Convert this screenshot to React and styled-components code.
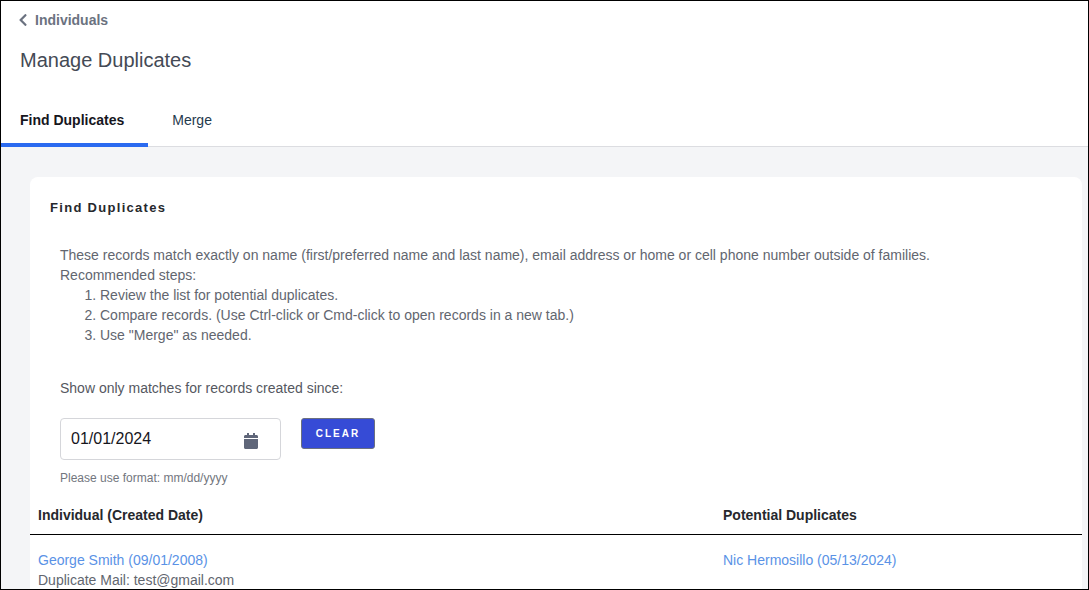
import React from 'react';
import styled, { createGlobalStyle } from 'styled-components';
import { FaCalendar, FaChevronLeft } from 'react-icons/fa';

const GlobalStyle = createGlobalStyle`
  html, body {
    margin: 0;
    padding: 0;
    background: #fff;
  }
  * {
    box-sizing: border-box;
  }
`;

const App = () => (
  <>
    <GlobalStyle />
    <Page>
      <Header>
        <BackLink>
          <FaChevronLeft size={14} />
          Individuals
        </BackLink>
        <Title>Manage Duplicates</Title>
        <Tabs>
          <Tab $active>Find Duplicates</Tab>
          <Tab>Merge</Tab>
        </Tabs>
      </Header>
      <Content>
        <Card>
          <CardTitle>Find Duplicates</CardTitle>
          <Intro>
            These records match exactly on name (first/preferred name and last name), email address or home or cell phone number outside of families.
            <br />
            Recommended steps:
            <Steps>
              <li>Review the list for potential duplicates.</li>
              <li>Compare records. (Use Ctrl-click or Cmd-click to open records in a new tab.)</li>
              <li>Use "Merge" as needed.</li>
            </Steps>
          </Intro>
          <FilterLabel>Show only matches for records created since:</FilterLabel>
          <FilterRow>
            <DateField>
              <DateValue>01/01/2024</DateValue>
              <CalendarIcon size={16} />
            </DateField>
            <ClearButton>CLEAR</ClearButton>
          </FilterRow>
          <Hint>Please use format: mm/dd/yyyy</Hint>
          <Table>
            <thead>
              <tr>
                <HeadCell $wide>Individual (Created Date)</HeadCell>
                <HeadCell>Potential Duplicates</HeadCell>
              </tr>
            </thead>
            <tbody>
              <tr>
                <BodyCell>
                  <PersonLink>George Smith (09/01/2008)</PersonLink>
                  <Detail>Duplicate Mail: test@gmail.com</Detail>
                </BodyCell>
                <BodyCell>
                  <PersonLink>Nic Hermosillo (05/13/2024)</PersonLink>
                </BodyCell>
              </tr>
            </tbody>
          </Table>
        </Card>
      </Content>
    </Page>
  </>
);

const Page = styled.div`
  width: 1089px;
  height: 590px;
  overflow: hidden;
  border: 1px solid #000;
  background: #f4f5f7;
  font-family: 'Liberation Sans', Arial, sans-serif;
`;

const Header = styled.header`
  height: 146px;
  background: #fff;
  border-bottom: 1px solid #dcdde1;
  padding-top: 11px;
`;

const BackLink = styled.a`
  display: flex;
  align-items: center;
  gap: 5px;
  height: 16px;
  padding-left: 15px;
  font-size: 14px;
  font-weight: 700;
  color: #6b7280;
`;

const Title = styled.h1`
  margin: 18px 0 0 19px;
  font-size: 20px;
  line-height: 28px;
  font-weight: 400;
  color: #444a55;
`;

const Tabs = styled.nav`
  display: flex;
  margin-top: 26px;
  height: 46px;
`;

const Tab = styled.div`
  display: flex;
  align-items: center;
  padding: 0 24px 3px ${({ $active }) => ($active ? '19px' : '24px')};
  height: 47px;
  font-size: 14px;
  font-weight: ${({ $active }) => ($active ? 700 : 400)};
  color: ${({ $active }) => ($active ? '#16161d' : '#1f3a4d')};
  border-bottom: 4px solid ${({ $active }) => ($active ? '#2a6af0' : 'transparent')};
`;

const Content = styled.main`
  padding: 30px 6px 0 29px;
`;

const Card = styled.section`
  height: 440px;
  padding: 23px 0 0;
  background: #fff;
  border-radius: 8px 8px 0 0;
`;

const CardTitle = styled.h2`
  margin: 0 0 0 20px;
  font-size: 13px;
  line-height: 16px;
  font-weight: 700;
  letter-spacing: 1.3px;
  color: #26282d;
`;

const Intro = styled.div`
  margin: 29px 0 0 30px;
  font-size: 14px;
  line-height: 20px;
  color: #62666f;
`;

const Steps = styled.ol`
  margin: 0;
  padding-left: 40px;
`;

const FilterLabel = styled.p`
  margin: 33px 0 0 30px;
  font-size: 14px;
  line-height: 20px;
  color: #55585f;
`;

const FilterRow = styled.div`
  display: flex;
  align-items: flex-start;
  gap: 20px;
  margin: 20px 0 0 30px;
`;

const DateField = styled.div`
  display: flex;
  align-items: center;
  justify-content: space-between;
  width: 221px;
  height: 42px;
  padding: 0 21px 0 10px;
  background: #fff;
  border: 1px solid #d5d6da;
  border-radius: 4px;
`;

const DateValue = styled.span`
  font-size: 16px;
  color: #16161d;
`;

const CalendarIcon = styled(FaCalendar)`
  margin-top: 4px;
  color: #5f6679;
`;

const ClearButton = styled.button`
  width: 74px;
  height: 31px;
  padding: 0 0 1px;
  background: #364bd6;
  border: 1px solid #6b7080;
  border-radius: 3px;
  color: #fff;
  font-family: inherit;
  font-size: 10px;
  font-weight: 700;
  letter-spacing: 2px;
`;

const Hint = styled.p`
  margin: 10px 0 0 30px;
  font-size: 12px;
  line-height: 16px;
  color: #72767e;
`;

const Table = styled.table`
  width: 100%;
  margin-top: 10px;
  border-collapse: collapse;
`;

const HeadCell = styled.th`
  width: ${({ $wide }) => ($wide ? '685px' : 'auto')};
  height: 38px;
  padding: 0 8px;
  font-size: 14px;
  font-weight: 700;
  text-align: left;
  color: #26282d;
  border-bottom: 1px solid #000;
`;

const BodyCell = styled.td`
  padding: 15px 8px 0;
  vertical-align: top;
`;

const PersonLink = styled.a`
  display: block;
  font-size: 14px;
  line-height: 20px;
  color: #5a92e6;
`;

const Detail = styled.div`
  font-size: 14px;
  line-height: 20px;
  color: #62666f;
`;

export default App;
